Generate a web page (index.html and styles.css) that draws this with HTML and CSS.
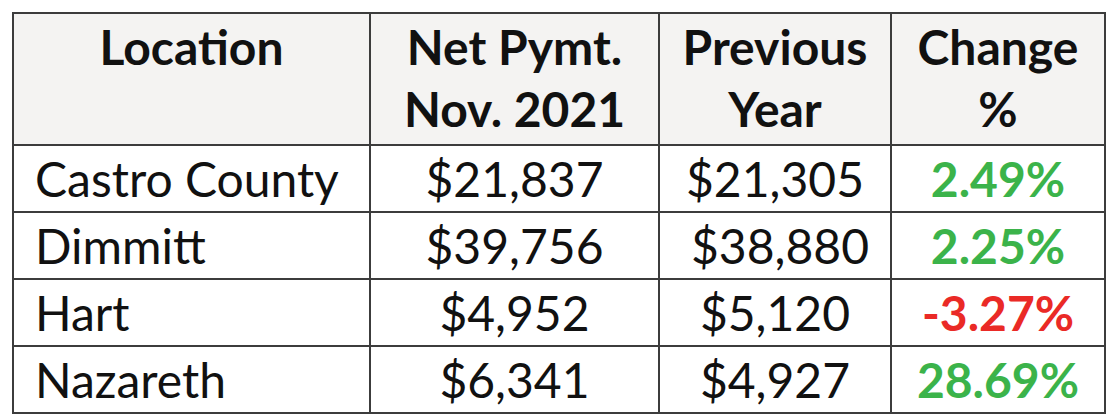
FILE: index.html
```html
<!DOCTYPE html>
<html>
<head>
<meta charset="utf-8">
<link rel="stylesheet" href="styles.css">
</head>
<body>
<table class="report">
  <colgroup>
    <col class="c-loc">
    <col class="c-net">
    <col class="c-prev">
    <col class="c-chg">
  </colgroup>
  <thead>
    <tr>
      <th>Location</th>
      <th>Net Pymt.<br>Nov. 2021</th>
      <th>Previous<br>Year</th>
      <th>Change<br>%</th>
    </tr>
  </thead>
  <tbody>
    <tr>
      <td class="loc">Castro County</td>
      <td>$21,837</td>
      <td>$21,305</td>
      <td class="up">2.49%</td>
    </tr>
    <tr>
      <td class="loc">Dimmitt</td>
      <td>$39,756</td>
      <td class="nudge">$38,880</td>
      <td class="up">2.25%</td>
    </tr>
    <tr>
      <td class="loc">Hart</td>
      <td>$4,952</td>
      <td>$5,120</td>
      <td class="down">-3.27%</td>
    </tr>
    <tr>
      <td class="loc">Nazareth</td>
      <td>$6,341</td>
      <td>$4,927</td>
      <td class="up">28.69%</td>
    </tr>
  </tbody>
</table>
</body>
</html>
```

FILE: styles.css
```css
html, body {
  margin: 0;
  padding: 0;
  background: #ffffff;
}

body {
  padding: 12px 0 0 12px;
  font-family: Lato, "Liberation Sans", sans-serif;
  color: #111111;
}

.report {
  border-collapse: collapse;
  table-layout: fixed;
  width: 1092px;
}

.c-loc { width: 357px; }
.c-net { width: 289px; }
.c-prev { width: 232px; }
.c-chg { width: 214px; }

.report th,
.report td {
  border: 2px solid #3c3c3c;
  padding: 0;
  text-align: center;
  white-space: nowrap;
}

.report th {
  background: #f4f3f2;
  font-weight: 700;
  font-size: 48px;
  line-height: 62px;
  height: 128px;
  vertical-align: top;
  padding-top: 2px;
}

.report td {
  font-size: 48px;
  height: 65px;
  line-height: 65px;
  vertical-align: middle;
}

.report td.loc {
  text-align: left;
  padding-left: 21px;
}

.report td.nudge {
  padding-left: 10px;
}

.report td.up {
  color: #3bb34a;
  font-weight: 700;
}

.report td.down {
  color: #ea2a26;
  font-weight: 700;
}
```
